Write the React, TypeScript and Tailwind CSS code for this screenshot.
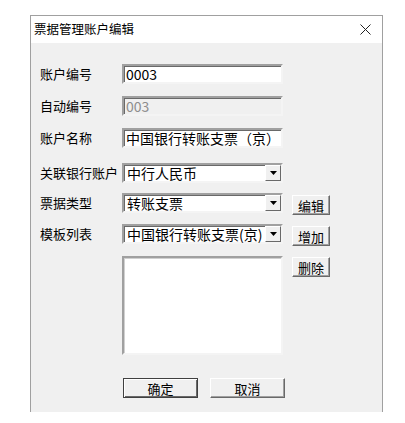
const font = "font-['SimSun','Noto_Sans_CJK_SC',sans-serif]";

function Field({ value, disabled }: { value: string; disabled?: boolean }) {
  return (
    <div
      className={`flex h-[20px] w-[161px] shrink-0 items-center border-2 border-t-[#a0a0a0] border-l-[#a0a0a0] border-b-[#f4f4f4] border-r-[#f4f4f4] px-[2px] text-[14px] leading-none shadow-[inset_1px_1px_0_#696969] ${
        disabled ? "bg-[#f0f0f0] text-[#8d8d8d]" : "bg-white text-black"
      }`}
    >
      {value}
    </div>
  );
}

function Combo({ value }: { value: string }) {
  return (
    <div className="flex h-[20px] w-[161px] shrink-0 items-stretch border-2 border-t-[#a0a0a0] border-l-[#a0a0a0] border-b-[#f4f4f4] border-r-[#f4f4f4] bg-white shadow-[inset_1px_1px_0_#696969]">
      <div className="flex min-w-0 flex-1 items-center whitespace-nowrap pl-[3px] text-[14px] leading-none text-black">
        {value}
      </div>
      <div className="flex w-[16px] shrink-0 items-center justify-center border border-t-white border-l-white border-b-[#696969] border-r-[#696969] bg-[#f0f0f0]">
        <svg width="7" height="4" viewBox="0 0 7 4">
          <path d="M0 0h7L3.5 4z" fill="#000" />
        </svg>
      </div>
    </div>
  );
}

function Btn({
  label,
  w,
  strong,
}: {
  label: string;
  w: string;
  strong?: boolean;
}) {
  return (
    <div
      className={`${w} flex h-[20px] shrink-0 items-center justify-center border bg-[#f0f0f0] text-[13px] leading-none text-black ${
        strong
          ? "border-[#404040] shadow-[inset_1px_1px_0_#ffffff,inset_-1px_-1px_0_#696969]"
          : "border-t-white border-l-white border-b-[#696969] border-r-[#696969] shadow-[inset_-1px_-1px_0_#a0a0a0]"
      }`}
    >
      {label}
    </div>
  );
}

function Row({
  label,
  children,
  top,
}: {
  label: string;
  children: React.ReactNode;
  top: string;
}) {
  return (
    <div className={`flex h-[20px] items-start ${top}`}>
      <div className="w-[91px] shrink-0 whitespace-nowrap pl-[9px] text-[13px] leading-[20px] text-black">
        {label}
      </div>
      {children}
    </div>
  );
}

export default function App() {
  return (
    <div className={`h-[423px] w-[405px] bg-white pl-[30px] pt-[15px] ${font}`}>
      <div className="flex h-[397px] w-[353px] flex-col border-x border-t border-[#a0a0a0] bg-[#f0f0f0]">
        <div className="flex h-[27px] items-center justify-between bg-white pl-[3px] pr-[11px]">
          <span className="text-[12.5px] text-black">票据管理账户编辑</span>
          <svg width="11" height="11" viewBox="0 0 11 11">
            <path d="M0.5 0.5l10 10M10.5 0.5l-10 10" stroke="#222" strokeWidth="1" />
          </svg>
        </div>

        <Row label="账户编号" top="mt-[21px]">
          <Field value="0003" />
        </Row>
        <Row label="自动编号" top="mt-[12px]">
          <Field value="003" disabled />
        </Row>
        <Row label="账户名称" top="mt-[12px]">
          <Field value="中国银行转账支票（京）" />
        </Row>
        <Row label="关联银行账户" top="mt-[15px]">
          <Combo value="中行人民币" />
        </Row>
        <Row label="票据类型" top="mt-[10px]">
          <Combo value="转账支票" />
          <div className="ml-[9px] mt-[2px]">
            <Btn label="编辑" w="w-[38px]" />
          </div>
        </Row>
        <Row label="模板列表" top="mt-[11px]">
          <Combo value="中国银行转账支票(京)" />
          <div className="ml-[9px] mt-[2px]">
            <Btn label="增加" w="w-[38px]" />
          </div>
        </Row>

        <div className="mt-[12px] flex items-start pl-[91px]">
          <div className="h-[99px] w-[161px] shrink-0 border-2 border-t-[#a0a0a0] border-l-[#a0a0a0] border-b-[#f4f4f4] border-r-[#f4f4f4] bg-white shadow-[inset_1px_1px_0_#d0d0d0]" />
          <div className="ml-[9px] mt-[1px]">
            <Btn label="删除" w="w-[38px]" />
          </div>
        </div>

        <div className="mt-[23px] flex gap-[12px] pl-[92px]">
          <Btn label="确定" w="w-[75px]" strong />
          <Btn label="取消" w="w-[75px]" />
        </div>
      </div>
    </div>
  );
}
